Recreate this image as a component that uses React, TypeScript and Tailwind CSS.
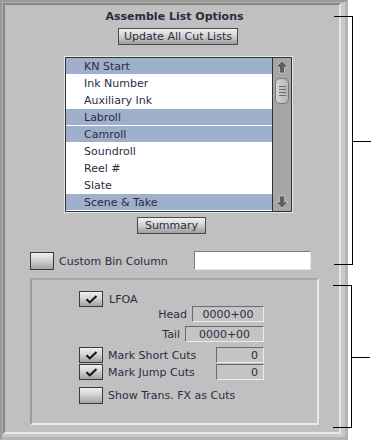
import React from 'react';

const font = { fontFamily: '"DejaVu Sans", Verdana, sans-serif' };

function Check({ checked = false, h = 'h-[16px]' }: { checked?: boolean; h?: string }) {
  return (
    <div className={`w-[24px] ${h} shrink-0 border border-[#3a3a3a] bg-gradient-to-b from-[#f0f0f0] via-[#cfcfcf] to-[#a2a2a2] flex items-center justify-center`}>
      {checked && (
        <svg width="13" height="9" viewBox="0 0 13 9">
          <path d="M1.5 4.2 L4.8 7.4 L11.5 1" stroke="#111" strokeWidth="2" fill="none" />
        </svg>
      )}
    </div>
  );
}

function Button({ label, w }: { label: string; w: string }) {
  return (
    <div className={`${w} h-[17px] border border-[#4a4a4a] bg-gradient-to-b from-[#f2f2f2] via-[#d0d0d0] to-[#9c9c9c] flex items-center justify-center text-[11px] leading-none text-[#2c2c44]`}>
      {label}
    </div>
  );
}

function Field({ value, w, right = false }: { value: string; w: string; right?: boolean }) {
  return (
    <div
      className={`${w} h-[16px] border-t border-l border-t-[#6a6a6a] border-l-[#6a6a6a] border-b border-r border-b-[#ececec] border-r-[#ececec] bg-[#c4c4c4] flex items-center text-[11px] leading-none text-[#2c2c44] ${right ? 'justify-end pr-[5px]' : 'justify-center'}`}
    >
      {value}
    </div>
  );
}

const items = [
  { name: 'KN Start', sel: true },
  { name: 'Ink Number', sel: false },
  { name: 'Auxiliary Ink', sel: false },
  { name: 'Labroll', sel: true },
  { name: 'Camroll', sel: true },
  { name: 'Soundroll', sel: false },
  { name: 'Reel #', sel: false },
  { name: 'Slate', sel: false },
  { name: 'Scene & Take', sel: true },
];

function ListBox() {
  return (
    <div className="ml-[59px] mt-[11px] w-[229px] border border-[#e6e6e6]">
      <div className="flex border border-[#333]">
        <div className="flex-1 bg-white">
          {items.map((it) => (
            <div key={it.name} className="h-[17px] flex flex-col">
              <div
                className={`h-[16px] flex items-center pl-[18px] text-[11px] leading-none text-[#2c2c44] ${it.sel ? 'bg-[#9eb0cb]' : 'bg-white'}`}
              >
                {it.name}
              </div>
              <div className="h-[1px] bg-white" />
            </div>
          ))}
        </div>
        <div className="w-[19px] border-l border-[#333] bg-[#a6a6a6] flex flex-col items-center">
          <svg width="14" height="14" viewBox="0 0 14 14" className="mt-[2px]">
            <path d="M7 1 L13 7 L9.5 7 L9.5 13 L4.5 13 L4.5 7 L1 7 Z" fill="#5e5e5e" stroke="#d8d8d8" strokeWidth="0.6" />
          </svg>
          <div className="mt-[4px] w-[14px] h-[26px] rounded-[5px] border border-[#7a7a7a] bg-gradient-to-r from-[#d6d6d6] to-[#b4b4b4] flex flex-col items-center justify-center gap-[2px]">
            <div className="w-[7px] h-[1px] bg-[#6a6a6a]" />
            <div className="w-[7px] h-[1px] bg-[#6a6a6a]" />
            <div className="w-[7px] h-[1px] bg-[#6a6a6a]" />
            <div className="w-[7px] h-[1px] bg-[#6a6a6a]" />
          </div>
          <div className="flex-1" />
          <svg width="14" height="14" viewBox="0 0 14 14" className="mb-[2px]">
            <path d="M7 13 L13 7 L9.5 7 L9.5 1 L4.5 1 L4.5 7 L1 7 Z" fill="#5e5e5e" stroke="#d8d8d8" strokeWidth="0.6" />
          </svg>
        </div>
      </div>
    </div>
  );
}

function Bracket({ top, height, left }: { top: string; height: string; left: string }) {
  return (
    <div className={`absolute ${top} ${left} ${height} w-[19px] border-t border-b border-r border-black`}>
      <div className="absolute top-1/2 left-[18px] w-[19px] h-[1px] bg-black" />
    </div>
  );
}

export default function App() {
  return (
    <div className="relative w-[371px] h-[443px] bg-white overflow-hidden" style={font}>
      <div className="w-[348px] h-[440px] border-t-2 border-l-2 border-r-[3px] border-b-[3px] border-t-[#9a9a9a] border-l-[#9a9a9a] border-r-[#b4b4b4] border-b-[#b4b4b4]">
        <div className="h-full border-t border-l border-r-[4px] border-b-[3px] border-t-[#b0b0b0] border-l-[#b0b0b0] border-r-[#c8c8c8] border-b-[#c8c8c8]">
          <div className="h-full border-2 border-t-[#888] border-l-[#888] border-r-[#e6e6e6] border-b-[#e6e6e6] bg-[#c0c0c0] flex flex-col items-start">
            <div className="w-full pl-[5px] mt-[5px] text-center text-[11px] leading-[14px] font-bold text-[#2a2a40]">
              Assemble List Options
            </div>
            <div className="ml-[113px] mt-[4px]">
              <Button label="Update All Cut Lists" w="w-[120px]" />
            </div>

            <ListBox />

            <div className="ml-[132px] mt-[4px]">
              <Button label="Summary" w="w-[69px]" />
            </div>

            <div className="ml-[25px] mt-[18px] flex items-center">
              <Check h="h-[18px]" />
              <span className="ml-[5px] text-[11px] leading-none text-[#2c2c44]">Custom Bin Column</span>
              <div className="ml-auto" />
            </div>
            <div className="ml-[189px] mt-[-19px] w-[117px] h-[19px] bg-white border-t border-l border-t-[#7c7c7c] border-l-[#7c7c7c] border-b border-r border-b-[#e8e8e8] border-r-[#e8e8e8]" />

            <div className="ml-[25px] mt-[8px] w-[289px] h-[147px] border-2 border-t-[#a6a6a6] border-l-[#9c9c9c] border-r-[#e8e8e8] border-b-[#e8e8e8] flex flex-col items-start text-[11px] leading-none text-[#2c2c44]">
              <div className="ml-[47px] mt-[11px] flex items-center">
                <Check checked />
                <span className="ml-[6px]">LFOA</span>
              </div>
              <div className="mt-[-1px] flex items-center">
                <span className="w-[155px] text-right">Head</span>
                <div className="ml-[5px]">
                  <Field value="0000+00" w="w-[72px]" />
                </div>
              </div>
              <div className="mt-[4px] flex items-center">
                <span className="w-[148px] text-right">Tail</span>
                <div className="ml-[5px]">
                  <Field value="0000+00" w="w-[79px]" />
                </div>
              </div>
              <div className="ml-[47px] mt-[5px] flex items-center">
                <Check checked />
                <span className="ml-[5px] w-[108px]">Mark Short Cuts</span>
                <Field value="0" w="w-[48px]" right />
              </div>
              <div className="ml-[47px] mt-[1px] flex items-center">
                <Check checked />
                <span className="ml-[5px] w-[108px]">Mark Jump Cuts</span>
                <Field value="0" w="w-[48px]" right />
              </div>
              <div className="ml-[47px] mt-[7px] flex items-center">
                <Check h="h-[17px]" />
                <span className="ml-[5px]">Show Trans. FX as Cuts</span>
              </div>
            </div>
          </div>
        </div>
      </div>

      <Bracket top="top-[16px]" left="left-[334px]" height="h-[249px]" />
      <Bracket top="top-[285px]" left="left-[333px]" height="h-[143px]" />
    </div>
  );
}
